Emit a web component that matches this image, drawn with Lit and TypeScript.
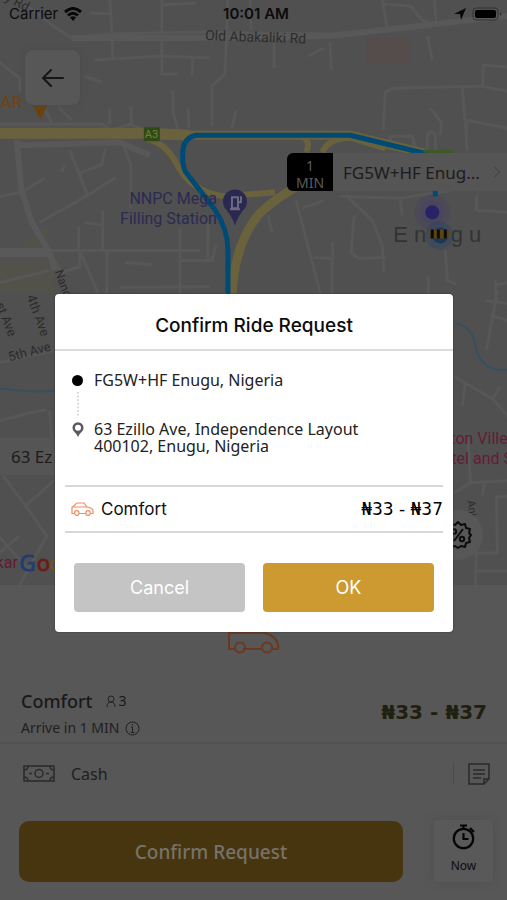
import { LitElement, html, css, svg } from "lit";
import { customElement } from "lit/decorators.js";

const minorRoads = [
  "M20 0 L48 22 L72 38 L108 34 L200 32 L330 34 L420 26 L507 16",
  "M110 0 L112 30 L113 60 M90 13 L112 14 M162 0 L162 74 L178 74 M95 60 L160 56 L210 58 M193 58 L192 76",
  "M228 0 L225 74 L212 86 L212 126 M162 5 L196 3 M250 0 L251 30",
  "M274 40 L274 68 M330 42 L331 70 M308 56 L324 48 M382 0 L388 33 M384 4 L410 6 L422 20 L434 25",
  "M434 0 L436 24 M427 36 L432 60 M383 130 L385 92 L392 88 L480 86 L507 91 M482 86 L483 65 L507 67",
  "M462 88 L467 150 M467 120 L507 128 M430 108 L441 122 L440 135 M427 150 L427 135 Q431 128 435 135 L435 150",
  "M390 150 L390 136 L412 136 L416 150 M173 90 L173 112 L179 132 M188 108 L189 128 M236 110 L232 128",
  "M131 106 L132 126 M110 108 L110 124 M85 76 L102 82 M0 62 L20 78 L20 92 M58 106 L72 120 M40 100 L52 122",
  "M0 124 L102 124 L112 130 L130 124 L150 132",
  "M0 196 L22 192 L45 178 M62 172 L65 164 M70 150 L88 195 M80 173 L102 164 L106 148 M40 222 L88 195 L116 177",
  "M124 146 L131 164 L131 208 M50 250 L200 250 M84 222 L103 225 M103 210 L103 250 M107 250 L107 300",
  "M79 226 L79 250 M52 255 L62 272 L80 266 L80 252 M80 250 L98 292 M0 282 L50 270 M180 228 L180 300",
  "M180 260 L212 260 L216 244 M120 287 L210 286 M208 222 L208 260 M125 262 L152 264",
  "M296 200 L300 215 L322 300 M302 208 L324 200 M345 194 L372 220 L382 245 L384 272 M354 215 L351 252 L358 258",
  "M314 257 L332 258 L332 300 M332 242 L333 258 M358 258 L386 257 M400 198 L402 215 M445 250 L447 280 L456 284",
  "M428 276 L428 300 M476 195 L476 210 L507 212 M478 172 L477 192 M495 280 L495 300 M495 285 L507 282",
  "M340 196 L400 198 L450 190 M466 120 L466 148 M268 215 L272 232",
  "M0 420 L34 411 L47 409 M50 410 L52 438 M0 362 L54 350 M0 470 L26 505 L54 480 M26 505 L47 535 L20 584 M0 536 L30 570 M0 552 L20 535",
  "M497 290 L486 350 M485 300 L507 303 M490 315 L507 320 M454 376 L492 398 L507 415 M492 398 L500 386 M465 382 L462 405",
  "M454 492 L470 482 L507 480 M484 482 L482 495 M496 495 L497 552 L472 552 M476 552 L475 584 M475 570 L507 570 M497 496 L507 495",
  "M468 440 L470 482 M454 554 L472 552",
];

@customElement("app-root")
export class AppRoot extends LitElement {
  static styles = css`
    :host {
      display: block;
      font-family: "Noto Sans", sans-serif;
      color: #151515;
    }
    * { box-sizing: border-box; }
    button { font: inherit; color: inherit; border: 0; padding: 0; margin: 0; background: none; }
    svg { display: block; fill: none; }
    .screen {
      position: relative;
      display: flex;
      flex-direction: column;
      min-height: 100vh;
      background: #575757;
      overflow: hidden;
    }
    .map { position: relative; flex: 1; min-height: 480px; background: #505050; overflow: hidden; }
    .canvas { position: absolute; inset: 0; width: 100%; height: 100%; }
    .minor { stroke: #575757; stroke-width: 3; stroke-linejoin: round; }
    .map-text { font-family: Roboto, sans-serif; }
    .status {
      position: relative;
      display: grid;
      grid-template-columns: 1fr auto 1fr;
      align-items: center;
      height: 28px;
      padding: 0 4px 0 9px;
      font: 400 15px/20px Inter, sans-serif;
      color: #0b0b0b;
    }
    .status b { font-weight: 600; }
    .side { display: flex; align-items: center; gap: 6px; }
    .end { justify-content: flex-end; }
    .back {
      position: relative;
      display: grid;
      place-items: center;
      width: 55px;
      height: 55px;
      margin: 22px 0 0 25px;
      border-radius: 8px;
      background: #575757;
      box-shadow: 0 0 6px #4a4a4a;
    }
    .pickup {
      position: absolute;
      top: 153px;
      left: 287px;
      right: 0;
      display: flex;
      height: 38px;
      border-radius: 6px 0 0 6px;
      overflow: hidden;
      background: #555555;
      font-size: 17px;
    }
    .eta {
      width: 46px;
      flex: none;
      background: #000;
      color: #5c5c5c;
      font-size: 14px;
      line-height: 17px;
      text-align: center;
      padding-top: 4px;
    }
    .eta span { display: block; }
    .place { flex: 1; display: flex; align-items: center; justify-content: space-between; padding: 0 6px 0 10px; color: #1c1c1c; }
    .dropoff {
      position: absolute;
      top: 438px;
      left: 0;
      width: 200px;
      height: 37px;
      padding-left: 11px;
      background: #555555;
      font-size: 17px;
      line-height: 37px;
      color: #1c1c1c;
    }
    .promo {
      position: absolute;
      top: 510px;
      right: 24px;
      display: grid;
      place-items: center;
      width: 50px;
      height: 50px;
      border-radius: 50%;
      background: #575757;
    }
    .sheet { padding-bottom: 18px; }
    .ride-icon { display: grid; justify-content: center; padding-top: 38px; }
    .ride { display: flex; justify-content: space-between; padding: 33px 20px 0 21px; height: 88px; }
    .name { display: flex; align-items: center; gap: 14px; font-size: 18px; font-weight: 500; line-height: 28px; color: #191919; }
    .seats { display: flex; align-items: center; gap: 2px; font-size: 14px; font-weight: 400; }
    .arrive { display: flex; align-items: center; gap: 6px; font-size: 14px; line-height: 26px; color: #202020; }
    .fare { font: 700 20px/50px "DejaVu Sans", sans-serif; color: #20200f; }
    .pay {
      display: flex;
      align-items: center;
      height: 64px;
      padding: 0 17px 3px 23px;
      border-top: 2px solid #525252;
      font-size: 16px;
      color: #202020;
    }
    .cash { flex: 1; padding-left: 16px; }
    .note { padding-left: 14px; border-left: 1px solid #4b4b4b; }
    .actions { display: flex; gap: 31px; padding: 14px 14px 0 19px; }
    .confirm {
      flex: 1;
      height: 61px;
      margin-top: 1px;
      border-radius: 10px;
      background: #46350f;
      color: #777269;
      font-size: 19px;
      font-weight: 500;
    }
    .now {
      display: flex;
      flex-direction: column;
      align-items: center;
      gap: 6px;
      width: 59px;
      height: 62px;
      padding-top: 4px;
      border-radius: 4px;
      box-shadow: 0 0 8px #505050;
      background: #595959;
      font-size: 12px;
      line-height: 20px;
      color: #0d0d0d;
    }
    .layer {
      position: absolute;
      inset: 0;
      display: flex;
      align-items: center;
      padding: 25px 54px 0 55px;
    }
    .dialog { flex: 1; background: #fff; border-radius: 4px; box-shadow: 0 0 2px #333; }
    h2 {
      margin: 0;
      padding: 19px 0 10px;
      border-bottom: 2px solid #dcdcdc;
      text-align: center;
      font: 500 19px/26px Inter, sans-serif;
      color: #0c0c0c;
    }
    .route {
      display: grid;
      grid-template-columns: 13px 1fr;
      column-gap: 10px;
      margin: 0 10px;
      padding: 21px 6px 30px;
      border-bottom: 2px solid #d8d8d8;
      font-size: 16px;
      line-height: 17px;
      color: #222;
    }
    .route svg { justify-self: center; }
    .dot { width: 11px; height: 11px; border-radius: 50%; background: #000; justify-self: center; align-self: center; }
    .dots { height: 31px; padding-top: 3px; justify-self: center; }
    .to { padding-top: 1px; }
    .option {
      display: flex;
      align-items: center;
      height: 46px;
      margin: 0 10px;
      padding-left: 6px;
      border-bottom: 2px solid #d8d8d8;
      color: #111;
    }
    .option span { flex: 1; padding-left: 7px; font: 400 17px/20px Inter, sans-serif; }
    .option b { font: 400 17px/20px "DejaVu Sans", sans-serif; color: #000; }
    .buttons { display: grid; grid-template-columns: 1fr 1fr; gap: 18px; padding: 30px 19px 20px; }
    .buttons button { height: 49px; padding-top: 2px; border-radius: 4px; color: #fff; font: 400 18px/24px Inter, sans-serif; background: #c4c4c4; }
    .buttons .ok { background: #cc9a30; }
  `;

  private renderMap() {
    return svg`
      <svg class="canvas" viewBox="0 0 507 584" preserveAspectRatio="xMidYMid slice" aria-label="Map of Enugu">
        <path fill="#544d4c" d="M366 38h44v26h-44z"/>
        <path fill="#53524a" d="M0 262h55v30H0zM50 225l-30 18 25 20z"/>
        <g class="minor">${minorRoads.map((d) => svg`<path d="${d}"/>`)}</g>
        <path stroke="#585858" stroke-width="6" d="M17 140 L22 190 L32 222 L50 252 L55 270 M20 145 L120 142 L150 155 M72 38 H190 L330 36 L507 16"/>
        <path stroke="#595959" stroke-width="9" d="M0 252H50"/>
        <path stroke="#38505e" stroke-width="2" d="M0 388 C20 390 32 392 55 390 M454 322 Q470 326 474 340 Q478 372 507 369"/>
        <g stroke="#69623d" stroke-linejoin="round">
          <path stroke-width="11" d="M0 133H150L190 135"/>
          <path stroke-width="6" d="M145 138 Q165 142 176 162 Q190 192 225 196 L275 192 M300 136 Q312 140 306 152 M322 152 Q330 136 352 138 L385 148"/>
          <path stroke-width="9" d="M232 296 Q234 245 258 215 Q275 196 330 168"/>
          <path stroke-width="9" d="M150 135H350L425 153"/>
        </g>
        <path stroke="#004a76" stroke-width="5" stroke-linejoin="round" d="M228 296 V250 Q228 228 214 208 L186 172 Q182 166 183 150 Q184 138 196 135 H350 L428 154"/>
        <path stroke="#3c5a22" stroke-width="3" d="M423 151H452"/>
        <rect x="144" y="127" width="16" height="14" fill="#2e4a16"/>
        <text class="map-text" x="145" y="138" font-size="11" fill="#7b7b3a">A3</text>
        <g class="map-text" fill="#2c2c2c" font-size="13">
          <text font-size="14" transform="translate(205 40) rotate(2)">Old Abakaliki Rd</text>
          <text transform="translate(5 0) rotate(28)">y Rd</text>
          <text transform="translate(27 296) rotate(70)">4th Ave</text>
          <text transform="translate(-4 304) rotate(68)">st Ave</text>
          <text transform="translate(10 361) rotate(-15)">5th Ave</text>
          <text transform="translate(55 271) rotate(70)" font-size="12">Nand</text>
          <text transform="translate(467 500) rotate(82)" font-size="11">Ani</text>
        </g>
        <text class="map-text" x="1" y="108" font-size="17" fill="#6e4310">AR</text>
        <path fill="#6b430c" d="M32 104h16l-7 15z"/>
        <g class="map-text" fill="#2c2a52" font-size="16" text-anchor="end">
          <text x="217" y="204">NNPC Mega</text>
          <text x="217" y="224">Filling Station</text>
        </g>
        <path fill="#2a2850" d="M235 225 Q232 216 226 209 A12 12 0 1 1 244 209 Q238 216 235 225z"/>
        <path stroke="#6b6a80" stroke-width="2" d="M232 208v-11h6v11zM230 209h10M238 202h3v-6"/>
        <g class="map-text" fill="#651c36" font-size="16">
          <text x="450" y="443">ton Ville</text>
          <text x="451" y="463">tel and S</text>
        </g>
        <text class="map-text" x="-4" y="567" font-size="16" fill="#5c1c34">kar</text>
        <g font-family="Open Sans, sans-serif" font-size="22">
          <text x="20" y="570" fill="#1f3d70" stroke="#1f3d70">G</text><text x="37" y="570" fill="#6b1c18" stroke="#6b1c18">o</text><text x="49" y="570" fill="#6f5a10">o</text>
        </g>
        <text x="393" y="242" font-size="22" font-family="Liberation Sans, sans-serif" fill="#333333">E n u g u</text>
        <circle cx="432" cy="212" r="18" fill="#433f66" opacity=".3"/>
        <circle cx="432" cy="212" r="12" fill="#433f66" opacity=".4"/>
        <circle cx="439" cy="235" r="14" fill="#26406a" opacity=".35"/>
        <circle cx="432" cy="212" r="7" fill="#2a2268"/>
        <path stroke="#004a76" stroke-width="5" d="M435 190v6"/>
        <circle cx="440" cy="235" r="8" fill="#1c3858"/>
        <rect x="429" y="229" width="20" height="9" rx="3" fill="#5c4410"/>
        <path stroke="#0c0c0c" stroke-width="3" d="M432 229v9M438 229v9M445 229v9"/>
      </svg>`;
  }

  render() {
    return html`
      <main class="screen">
        <div class="map">
          ${this.renderMap()}
          <div class="status">
            <span class="side">Carrier
              <svg width="18" height="14" viewBox="0 0 18 14" stroke="#080808" stroke-width="3"><path d="M1 5Q9-2 17 5M4 8.500Q9 4 14 8.500"/><path stroke="none" fill="#080808" d="M6 10.500Q9 8 12 10.500L9 14z"/></svg>
            </span>
            <b>10:01 AM</b>
            <span class="side end">
              <svg width="12" height="12" viewBox="0 0 12 12"><path fill="#080808" d="M0 6 12 0 7 12 6 6z"/></svg>
              <svg width="31" height="14" viewBox="0 0 31 14"><rect x="1" y="1" width="25" height="12" rx="3" stroke="#333"/><rect x="3" y="3" width="21" height="8" rx="2" fill="#000"/><path fill="#333" d="M28 5q3 2 0 4z"/></svg>
            </span>
          </div>
          <button class="back" aria-label="Back">
            <svg width="24" height="22" viewBox="0 0 24 22" stroke="#161616" stroke-width="2" stroke-linecap="round" stroke-linejoin="round"><path d="M22 11H2M10 3 2 11l8 8"/></svg>
          </button>
          <div class="pickup">
            <div class="eta"><span>1</span><span>MIN</span></div>
            <div class="place">FG5W+HF Enug...
              <svg width="8" height="14" viewBox="0 0 8 14" stroke="#414141" stroke-width="1"><path d="M1 2l6 5-6 5"/></svg>
            </div>
          </div>
          <div class="dropoff">63 Ez</div>
          <button class="promo" aria-label="Promotions">
            <svg width="28" height="28" viewBox="0 0 28 28" stroke="#0c0c0c" stroke-width="2" stroke-linejoin="round"><path d="M14 1l3 3 4-1 1 4 4 1-1 4 2 2-2 3 1 4-4 1-1 4-4-1-3 2-3-2-4 1-1-4-4-1 1-4-2-3 2-2-1-4 4-1 1-4 4 1z"/><path d="M19 8 10 20"/><circle cx="10" cy="10.500" r="2.200"/><circle cx="18" cy="18" r="2.200"/></svg>
          </button>
        </div>

        <section class="sheet">
          <div class="ride-icon">
            <svg width="54" height="31" viewBox="0 0 54 31" stroke="#6c3820" stroke-width="2"><path d="M8 26H2V10H38M16 26h19M45 26h6c1-8-3-13-13-16M2 10 10 3h22l8 7"/><circle cx="13" cy="24.500" r="5"/><circle cx="40" cy="24.500" r="5"/></svg>
          </div>
          <div class="ride">
            <div>
              <div class="name">Comfort
                <span class="seats"><svg width="10" height="12" viewBox="0 0 10 12" stroke="#222" stroke-width="1"><circle cx="5" cy="4" r="3"/><path d="M1 12q0-5 4-5t4 5"/></svg>3</span>
              </div>
              <div class="arrive">Arrive in 1 MIN
                <svg width="15" height="15" viewBox="0 0 15 15" stroke="#222"><circle cx="7.500" cy="7.500" r="6.500"/><path d="M6 6h1.500v5M5.500 11.500h4M7.500 3v1.500"/></svg>
              </div>
            </div>
            <div class="fare">₦33 - ₦37</div>
          </div>
          <div class="pay">
            <svg width="32" height="18" viewBox="0 0 32 18" stroke="#2a2a2a" stroke-width="1.500"><path d="M1 1h30v15H1zM1 5q4 0 4-4M31 5q-4 0-4-4M1 12q4 0 4 4M31 12q-4 0-4 4M6 8.500h3M23 8.500h3"/><circle cx="16" cy="8.500" r="4"/></svg>
            <span class="cash">Cash</span>
            <button class="note" aria-label="Add note">
              <svg width="22" height="22" viewBox="0 0 22 22" stroke="#2a2a2a" stroke-width="1.500"><path d="M1 1h20v15l-5 5H1zM16 21v-5h5M5 7h12M5 11h12M5 15h8"/></svg>
            </button>
          </div>
          <div class="actions">
            <button class="confirm">Confirm Request</button>
            <button class="now">
              <svg width="24" height="26" viewBox="0 0 24 26" stroke="#050505" stroke-width="2.200"><circle cx="11.500" cy="14.500" r="9.700"/><path d="M11.500 9v6h5M8 1.500h7M11.500 1v4M18 4l4 4"/></svg>
              Now
            </button>
          </div>
        </section>

        <div class="layer">
          <section class="dialog" role="dialog" aria-modal="true" aria-labelledby="title">
            <h2 id="title">Confirm Ride Request</h2>
            <div class="route">
              <span class="dot"></span><span>FG5W+HF Enugu, Nigeria</span>
              <svg class="dots" width="2" height="31" viewBox="0 0 2 31" stroke="#aaa" stroke-width="1" stroke-dasharray="2 2"><path d="M1 0v28"/></svg><span></span>
              <svg width="12" height="18" viewBox="0 0 12 18"><path fill="#5a5a62" fill-rule="evenodd" d="M6 17Q5 14 2 11.500A5.500 5.500 0 1 1 10 11.500Q7 14 6 17zM6 4.700a3 3 0 1 0 0 6 3 3 0 0 0 0-6z"/></svg>
              <span class="to">63 Ezillo Ave, Independence Layout<br />400102, Enugu, Nigeria</span>
            </div>
            <div class="option">
              <svg width="23" height="14" viewBox="0 0 23 14" stroke="#f28e62" stroke-width="1.200"><path d="M3 11.500H1V5h15l-3-4H6L1.500 5M8.500 11.500h6M19.500 11.500h2.500V9q0-3-6-4"/><circle cx="5.800" cy="11" r="2.300"/><circle cx="17" cy="11" r="2.300"/></svg>
              <span>Comfort</span><b>₦33 - ₦37</b>
            </div>
            <div class="buttons">
              <button>Cancel</button>
              <button class="ok">OK</button>
            </div>
          </section>
        </div>
      </main>
    `;
  }
}
